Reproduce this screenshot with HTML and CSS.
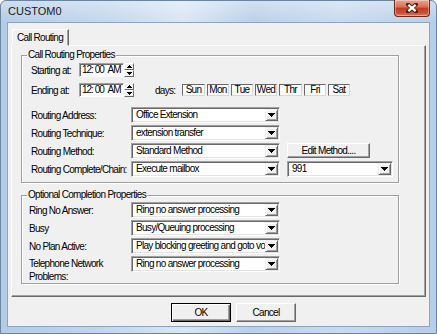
FILE: index.html
```html
<!DOCTYPE html>
<html>
<head>
<meta charset="utf-8">
<link rel="stylesheet" href="styles.css">
</head>
<body>
<div class="window">
  <div class="titlebar">
    <span class="title">CUSTOM0</span>
    <div class="close">
      <svg width="12" height="10" viewBox="0 0 12 10"><path d="M2 1.5L10 8.5M10 1.5L2 8.5" stroke="#4a1d14" stroke-width="4" stroke-linecap="round"/><path d="M2.3 1.8L9.7 8.2M9.7 1.8L2.3 8.2" stroke="#fff" stroke-width="2.2"/></svg>
    </div>
  </div>
  <div class="client">
    <div class="tabs"><div class="tab">Call Routing</div></div>
    <div class="panel">
      <fieldset class="group g1">
        <legend>Call Routing Properties</legend>
        <div class="gbody gbody1">
          <div class="row trow">
            <span class="lbl lbl-time">Starting at:</span>
            <div class="timebox">12: 00 <span class="ampm">AM</span></div>
            <div class="spin">
              <div class="spin-btn"><svg width="5" height="3"><path d="M2 0h1v1H2zM1 1h3v1H1zM0 2h5v1H0z"/></svg></div>
              <div class="spin-btn"><svg width="5" height="3"><path d="M0 0h5v1H0zM1 1h3v1H1zM2 2h1v1H2z"/></svg></div>
            </div>
          </div>
          <div class="row trow">
            <span class="lbl lbl-time">Ending at:</span>
            <div class="timebox">12: 00 <span class="ampm">AM</span></div>
            <div class="spin">
              <div class="spin-btn"><svg width="5" height="3"><path d="M2 0h1v1H2zM1 1h3v1H1zM0 2h5v1H0z"/></svg></div>
              <div class="spin-btn"><svg width="5" height="3"><path d="M0 0h5v1H0zM1 1h3v1H1zM2 2h1v1H2z"/></svg></div>
            </div>
            <span class="days-lbl">days:</span>
            <div class="days">
              <span class="day day-sun">Sun</span><span class="day">Mon</span><span class="day">Tue</span><span class="day">Wed</span><span class="day day-thr">Thr</span><span class="day">Fri</span><span class="day">Sat</span>
            </div>
          </div>
          <div class="row crow first">
            <span class="lbl lbl-route">Routing Address:</span>
            <div class="combo"><span class="combo-text">Office Extension</span><span class="combo-btn"><svg width="7" height="4"><path d="M0 0h7v1H0zM1 1h5v1H1zM2 2h3v1H2zM3 3h1v1H3z"/></svg></span></div>
          </div>
          <div class="row crow">
            <span class="lbl lbl-route">Routing Technique:</span>
            <div class="combo"><span class="combo-text">extension transfer</span><span class="combo-btn"><svg width="7" height="4"><path d="M0 0h7v1H0zM1 1h5v1H1zM2 2h3v1H2zM3 3h1v1H3z"/></svg></span></div>
          </div>
          <div class="row crow">
            <span class="lbl lbl-route">Routing Method:</span>
            <div class="combo"><span class="combo-text">Standard Method</span><span class="combo-btn"><svg width="7" height="4"><path d="M0 0h7v1H0zM1 1h5v1H1zM2 2h3v1H2zM3 3h1v1H3z"/></svg></span></div>
            <button class="btn edit-btn">Edit Method....</button>
          </div>
          <div class="row crow">
            <span class="lbl lbl-route">Routing Complete/Chain:</span>
            <div class="combo"><span class="combo-text">Execute mailbox</span><span class="combo-btn"><svg width="7" height="4"><path d="M0 0h7v1H0zM1 1h5v1H1zM2 2h3v1H2zM3 3h1v1H3z"/></svg></span></div>
            <div class="combo combo-small"><span class="combo-text">991</span><span class="combo-btn"><svg width="7" height="4"><path d="M0 0h7v1H0zM1 1h5v1H1zM2 2h3v1H2zM3 3h1v1H3z"/></svg></span></div>
          </div>
        </div>
      </fieldset>
      <fieldset class="group g2">
        <legend>Optional Completion Properties</legend>
        <div class="gbody gbody2">
          <div class="row crow">
            <span class="lbl lbl-opt">Ring No Answer:</span>
            <div class="combo"><span class="combo-text">Ring no answer processing</span><span class="combo-btn"><svg width="7" height="4"><path d="M0 0h7v1H0zM1 1h5v1H1zM2 2h3v1H2zM3 3h1v1H3z"/></svg></span></div>
          </div>
          <div class="row crow">
            <span class="lbl lbl-opt">Busy</span>
            <div class="combo"><span class="combo-text">Busy/Queuing processing</span><span class="combo-btn"><svg width="7" height="4"><path d="M0 0h7v1H0zM1 1h5v1H1zM2 2h3v1H2zM3 3h1v1H3z"/></svg></span></div>
          </div>
          <div class="row crow">
            <span class="lbl lbl-opt">No Plan Active:</span>
            <div class="combo"><span class="combo-text">Play blocking greeting and goto vo</span><span class="combo-btn"><svg width="7" height="4"><path d="M0 0h7v1H0zM1 1h5v1H1zM2 2h3v1H2zM3 3h1v1H3z"/></svg></span></div>
          </div>
          <div class="row crow tall">
            <span class="lbl lbl-opt two">Telephone Network<br>Problems:</span>
            <div class="combo"><span class="combo-text">Ring no answer processing</span><span class="combo-btn"><svg width="7" height="4"><path d="M0 0h7v1H0zM1 1h5v1H1zM2 2h3v1H2zM3 3h1v1H3z"/></svg></span></div>
          </div>
        </div>
      </fieldset>
    </div>
    <div class="buttons">
      <button class="btn dlg default">OK</button>
      <button class="btn dlg">Cancel</button>
    </div>
  </div>
</div>
</body>
</html>
```
FILE: styles.css
```css
html, body {
  margin: 0;
  padding: 0;
  background: #ffffff;
}
body {
  font-family: "Liberation Sans", Arial, sans-serif;
  font-size: 10px;
  letter-spacing: -0.7px;
  color: #000;
}
.window {
  width: 437px;
  height: 334px;
  box-sizing: border-box;
  border: 1px solid #6b84a0;
  border-radius: 6px 6px 0 0;
  padding: 0 6px 6px;
  display: flex;
  flex-direction: column;
  background:
    linear-gradient(180deg, rgba(255,255,255,0.35), rgba(255,255,255,0) 22px),
    linear-gradient(90deg, #b3cbe6 0%, #c3d7ed 25%, #d9e6f3 42%, #b9d0ea 58%, #c8daef 78%, #b6cde8 100%);
}
.titlebar {
  height: 21px;
  display: flex;
  align-items: flex-start;
}
.title {
  font-size: 11px;
  letter-spacing: 0;
  line-height: 21px;
  padding-left: 1px;
  color: #1a1a1a;
}
.close {
  margin-left: auto;
  margin-top: -1px;
  width: 36px;
  height: 17px;
  box-sizing: border-box;
  border: 1px solid #6a2a1c;
  border-top: none;
  border-radius: 0 0 4px 4px;
  background: linear-gradient(180deg, #eba594 0%, #d86e55 45%, #c23a1e 50%, #cc5032 80%, #de7d5e 100%);
  box-shadow: inset 0 0 0 1px rgba(255,255,255,0.35);
  display: flex;
  align-items: center;
  justify-content: center;
}
.client {
  flex: 1;
  background: #f0f0f0;
  border: 1px solid #8ea4bd;
  display: flex;
  flex-direction: column;
}
.tabs {
  display: flex;
  padding: 6px 0 0 4px;
}
.tab {
  position: relative;
  z-index: 1;
  width: 57px;
  height: 17px;
  margin-bottom: -1px;
  box-sizing: border-box;
  padding-left: 4px;
  line-height: 15px;
  background: #f0f0f0;
  border: 1px solid;
  border-color: #ffffff #696969 transparent #ffffff;
  box-shadow: inset -1px 0 #a0a0a0;
}
.panel {
  margin-left: 3px;
  width: 415px;
  height: 252px;
  box-sizing: border-box;
  border: 1px solid;
  border-color: #ffffff #696969 #696969 #ffffff;
  box-shadow: inset -1px -1px #a0a0a0;
}
.group {
  margin: 3px 0 0 9px;
  width: 378px;
  min-width: 0;
  box-sizing: border-box;
  padding: 0;
  border: 1px solid #a0a0a0;
  box-shadow: inset 1px 1px #ffffff, 1px 1px #ffffff;
}
.group legend {
  margin-left: 5px;
  padding: 0 1px;
  line-height: 12px;
  background: #f0f0f0;
}
.g2 {
  margin-top: 6px;
}
.gbody1 {
  padding: 2px 0 5px 9px;
}
.gbody2 {
  padding: 1px 0 1px 7px;
}
.row {
  display: flex;
  align-items: center;
}
.trow {
  height: 14px;
}
.trow + .trow {
  margin-top: 6px;
}
.crow {
  height: 16px;
  margin-top: 2px;
}
.crow.first {
  margin-top: 10px;
}
.gbody2 .crow:first-child {
  margin-top: 0;
}
.crow.tall {
  height: 26px;
  align-items: flex-start;
}
.lbl {
  white-space: nowrap;
}
.lbl-time {
  width: 48px;
}
.lbl-route {
  width: 100px;
}
.lbl-opt {
  width: 102px;
}
.lbl.two {
  line-height: 13px;
  margin-top: 1px;
}
.timebox {
  width: 45px;
  height: 14px;
  box-sizing: border-box;
  background: #fff;
  border: 1px solid;
  border-color: #a0a0a0 #ffffff #ffffff #a0a0a0;
  box-shadow: inset 1px 1px #696969;
  padding-left: 2px;
  line-height: 12px;
  white-space: nowrap;
  overflow: hidden;
  letter-spacing: -1px;
}
.ampm {
  margin-left: 2px;
}
.spin {
  width: 10px;
  height: 14px;
  display: flex;
  flex-direction: column;
}
.spin-btn {
  flex: 1;
  box-sizing: border-box;
  background: #f0f0f0;
  border: 1px solid;
  border-color: #ffffff #696969 #696969 #ffffff;
  display: flex;
  align-items: center;
  justify-content: center;
}
.spin-btn svg, .combo-btn svg {
  display: block;
  fill: #000;
}
.days-lbl {
  width: 27px;
  margin-left: 21px;
}
.days {
  display: flex;
  gap: 2px;
}
.day {
  width: 22px;
  height: 12px;
  box-sizing: border-box;
  border: 1px solid;
  border-color: #696969 #d8d8d8 #d8d8d8 #696969;
  background: #fbfbfb;
  text-align: center;
  line-height: 10px;
}
.day-sun, .day-thr {
  width: 23px;
}
.combo {
  width: 149px;
  height: 16px;
  box-sizing: border-box;
  background: #fff;
  border: 1px solid;
  border-color: #a0a0a0 #ffffff #ffffff #a0a0a0;
  box-shadow: inset 1px 1px #696969, inset -1px -1px #e3e3e3;
  display: flex;
  align-items: stretch;
  padding: 1px;
}
.combo-text {
  flex: 1;
  min-width: 0;
  padding-left: 3px;
  line-height: 12px;
  white-space: nowrap;
  overflow: hidden;
}
.combo-btn {
  width: 13px;
  flex: none;
  box-sizing: border-box;
  background: #f0f0f0;
  border: 1px solid;
  border-color: #f0f0f0 #696969 #696969 #f0f0f0;
  box-shadow: inset 1px 1px #ffffff, inset -1px -1px #a0a0a0;
  display: flex;
  align-items: center;
  justify-content: center;
}
.combo-small {
  width: 106px;
  margin-left: 7px;
}
.btn {
  font: inherit;
  letter-spacing: inherit;
  color: #000;
  background: #f0f0f0;
  border: 1px solid;
  border-color: #ffffff #696969 #696969 #ffffff;
  box-shadow: inset -1px -1px #a0a0a0;
  padding: 0;
  margin: 0;
}
.edit-btn {
  width: 83px;
  height: 15px;
  margin-left: 7px;
  align-self: flex-start;
  line-height: 12px;
}
.buttons {
  display: flex;
  gap: 5px;
  padding-left: 163px;
  margin-top: 6px;
}
.dlg {
  width: 60px;
  height: 19px;
}
.dlg.default {
  border-color: #000;
  box-shadow: inset 1px 1px #ffffff, inset -1px -1px #696969, inset -2px -2px #a0a0a0;
}
```
